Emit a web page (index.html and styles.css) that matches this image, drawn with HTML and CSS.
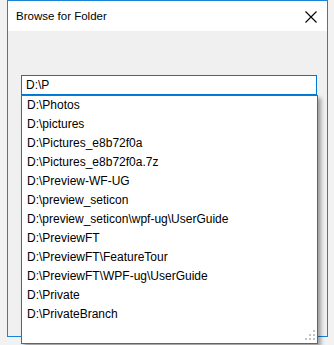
FILE: index.html
```html
<!DOCTYPE html>
<html lang="en">
<head>
    <meta charset="UTF-8">
    <title>Browse for Folder</title>
    <link rel="stylesheet" href="styles.css">
</head>
<body>
    <div class="window">
        <div class="title-bar">
            <span class="title">Browse for Folder</span>
            <svg class="close" width="12" height="12" viewBox="0 0 12 12">
                <path d="M0.5 0.5 L11.5 11.5 M11.5 0.5 L0.5 11.5" stroke="#000" stroke-width="1.1" fill="none"/>
            </svg>
        </div>
        <div class="content">
            <div class="path-box">D:\P</div>
        </div>
    </div>
    <ul class="suggestions">
        <li>D:\Photos</li>
        <li>D:\pictures</li>
        <li>D:\Pictures_e8b72f0a</li>
        <li>D:\Pictures_e8b72f0a.7z</li>
        <li>D:\Preview-WF-UG</li>
        <li>D:\preview_seticon</li>
        <li>D:\preview_seticon\wpf-ug\UserGuide</li>
        <li>D:\PreviewFT</li>
        <li>D:\PreviewFT\FeatureTour</li>
        <li>D:\PreviewFT\WPF-ug\UserGuide</li>
        <li>D:\Private</li>
        <li>D:\PrivateBranch</li>
    </ul>
    <svg class="grip" width="12" height="12" viewBox="0 0 12 12">
        <rect x="9" y="1" width="2" height="2" fill="#c4c4c4"/>
        <rect x="5" y="5" width="2" height="2" fill="#c4c4c4"/>
        <rect x="9" y="5" width="2" height="2" fill="#c4c4c4"/>
        <rect x="1" y="9" width="2" height="2" fill="#c4c4c4"/>
        <rect x="5" y="9" width="2" height="2" fill="#c4c4c4"/>
        <rect x="9" y="9" width="2" height="2" fill="#c4c4c4"/>
    </svg>
</body>
</html>
```

FILE: styles.css
```css
body {
    margin: 0;
    background-color: #f2f2f2;
    font-family: 'Segoe UI', 'Liberation Sans', sans-serif;
    font-size: 12px;
    color: #000;
    position: relative;
    height: 345px;
    overflow: hidden;
}
.window {
    margin-left: 7px;
    width: 319px;
    height: 335px;
    border: 1px solid #1883d7;
    border-top-color: #1883d7;
    background-color: #f0f0f0;
    display: flex;
    flex-direction: column;
}
.title-bar {
    height: 30px;
    background-color: #fff;
    display: flex;
    align-items: center;
    padding-left: 8px;
    padding-right: 10px;
}
.title {
    flex: 1;
    font-size: 11.5px;
}
.close {
    display: block;
    margin-top: 1px;
}
.content {
    padding: 44px 8px 0 13px;
}
.path-box {
    width: 290px;
    height: 18px;
    line-height: 18px;
    border: 1px solid #0078d7;
    background-color: #fff;
    padding-left: 4px;
}
.suggestions {
    position: absolute;
    left: 21px;
    top: 95px;
    width: 295px;
    height: 247px;
    margin: 0;
    padding: 0;
    list-style: none;
    background-color: #fff;
    border: 1px solid #646464;
    box-shadow: 3px 3px 4px rgba(0, 0, 0, 0.35);
}
.suggestions li {
    height: 19px;
    line-height: 19px;
    padding-left: 5px;
    white-space: nowrap;
}
.grip {
    position: absolute;
    left: 304px;
    top: 329px;
}
```
